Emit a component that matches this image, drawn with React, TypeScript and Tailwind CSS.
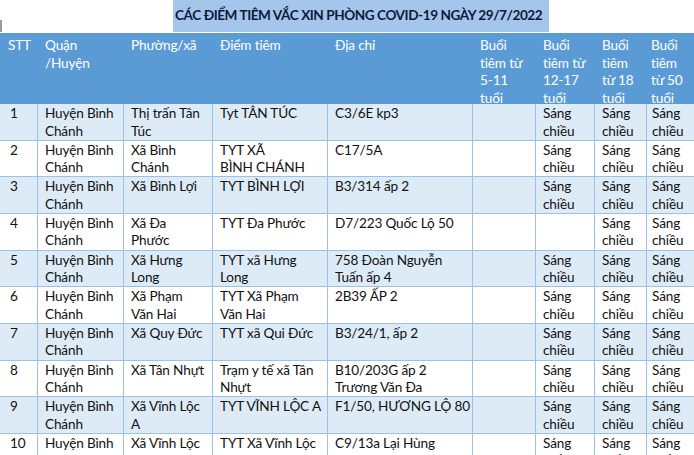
import React from 'react';

type Row = {
  stt: string;
  phuong: string[];
  diem: string[];
  diaChi: string[];
  b1217: boolean;
};

const huyen = ['Huyện Bình', 'Chánh'];
const sangChieu = ['Sáng', 'chiều'];

const rows: Row[] = [
  { stt: '1', phuong: ['Thị trấn Tân', 'Túc'], diem: ['Tyt TÂN TÚC'], diaChi: ['C3/6E kp3'], b1217: true },
  { stt: '2', phuong: ['Xã Bình', 'Chánh'], diem: ['TYT XÃ', 'BÌNH CHÁNH'], diaChi: ['C17/5A'], b1217: true },
  { stt: '3', phuong: ['Xã Bình Lợi'], diem: ['TYT BÌNH LỢI'], diaChi: ['B3/314 ấp 2'], b1217: true },
  { stt: '4', phuong: ['Xã Đa', 'Phước'], diem: ['TYT Đa Phước'], diaChi: ['D7/223 Quốc Lộ 50'], b1217: false },
  { stt: '5', phuong: ['Xã Hưng', 'Long'], diem: ['TYT xã Hưng', 'Long'], diaChi: ['758 Đoàn Nguyễn', 'Tuấn ấp 4'], b1217: true },
  { stt: '6', phuong: ['Xã Phạm', 'Văn Hai'], diem: ['TYT Xã Phạm', 'Văn Hai'], diaChi: ['2B39 ẤP 2'], b1217: true },
  { stt: '7', phuong: ['Xã Quy Đức'], diem: ['TYT xã Qui Đức'], diaChi: ['B3/24/1, ấp 2'], b1217: true },
  { stt: '8', phuong: ['Xã Tân Nhựt'], diem: ['Trạm y tế xã Tân', 'Nhựt'], diaChi: ['B10/203G ấp 2', 'Trương Văn Đa'], b1217: true },
  { stt: '9', phuong: ['Xã Vĩnh Lộc', 'A'], diem: ['TYT VĨNH LỘC A'], diaChi: ['F1/50, HƯƠNG LỘ 80'], b1217: true },
  { stt: '10', phuong: ['Xã Vĩnh Lộc'], diem: ['TYT Xã Vĩnh Lộc'], diaChi: ['C9/13a Lại Hùng'], b1217: true },
];

const headers: string[][] = [
  ['STT'],
  ['Quận', '/Huyện'],
  ['Phường/xã'],
  ['Điểm tiêm'],
  ['Địa chỉ'],
  ['Buổi', 'tiêm từ', '5-11', 'tuổi'],
  ['Buổi', 'tiêm từ', '12-17', 'tuổi'],
  ['Buổi', 'tiêm', 'từ 18', 'tuổi'],
  ['Buổi', 'tiêm', 'từ 50', 'tuổi'],
];

const cols = 'grid grid-cols-[37px_86px_89px_115px_145px_63px_59px_52px_48px]';

const Lines = ({ lines }: { lines: string[] }) => (
  <>
    {lines.map((l, i) => (
      <div key={i} className="whitespace-nowrap">{l}</div>
    ))}
  </>
);

export default function App() {
  return (
    <div className="w-[694px] h-[455px] overflow-hidden bg-white font-['Lato',sans-serif] text-[13.6px] tracking-[-0.15px] text-[#111]">
      {/* title band */}
      <div className="flex h-[33px]">
        <div className="w-[173px] flex items-end">
          <div className="w-[2px] h-[12px] bg-[#9a9a9a] mb-[1px]" />
        </div>
        <div className="w-[376px] h-[32px] bg-[#a4c6ea] pt-[5px] pl-[2px] font-bold text-[13.6px] tracking-[-0.45px] text-[#0e1a3a] whitespace-nowrap">
          CÁC ĐIỂM TIÊM VẮC XIN PHÒNG COVID-19 NGÀY 29/7/2022
        </div>
      </div>

      {/* header */}
      <div className={`${cols} h-[71px] bg-[#5b9bd5] text-white leading-[17.5px] pt-[4px]`}>
        {headers.map((h, i) => (
          <div key={i} className={i === 8 ? 'pl-[5px]' : 'pl-[8px]'}>
            <Lines lines={h} />
          </div>
        ))}
      </div>

      {/* body */}
      {rows.map((r, idx) => {
        const cells = [
          [r.stt],
          huyen,
          r.phuong,
          r.diem,
          r.diaChi,
          [],
          r.b1217 ? sangChieu : [],
          sangChieu,
          sangChieu,
        ];
        return (
          <div
            key={r.stt}
            className={`${cols} h-[36.67px] border-b border-[#9bc2e6] ${idx % 2 === 0 ? 'bg-[#ddebf7]' : 'bg-white'}`}
          >
            {cells.map((c, i) => (
              <div
                key={i}
                className={`leading-[17.5px] pt-[1px] ${i === 0 ? 'pl-[10px]' : 'border-l border-[#9bc2e6]'} ${i === 8 ? 'pl-[5px]' : i === 0 ? '' : 'pl-[7px]'}`}
              >
                <Lines lines={c} />
              </div>
            ))}
          </div>
        );
      })}
    </div>
  );
}
